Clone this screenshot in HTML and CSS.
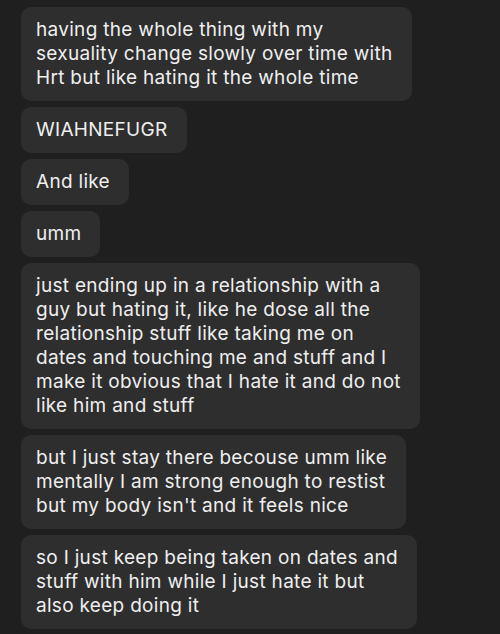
FILE: index.html
```html
<!DOCTYPE html>
<html>
<head>
<meta charset="utf-8">
<link rel="stylesheet" href="styles.css">
</head>
<body>
<div class="chat">
  <div class="msg">having the whole thing with my<br>sexuality change slowly over time with<br>Hrt but like hating it the whole time</div>
  <div class="msg">WIAHNEFUGR</div>
  <div class="msg">And like</div>
  <div class="msg">umm</div>
  <div class="msg">just ending up in a relationship with a<br>guy but hating it, like he dose all the<br>relationship stuff like taking me on<br>dates and touching me and stuff and I<br>make it obvious that I hate it and do not<br>like him and stuff</div>
  <div class="msg">but I just stay there becouse umm like<br>mentally I am strong enough to restist<br>but my body isn't and it feels nice</div>
  <div class="msg">so I just keep being taken on dates and<br>stuff with him while I just hate it but<br>also keep doing it</div>
</div>
</body>
</html>
```
FILE: styles.css
```css
html, body {
  margin: 0;
  background: #1f1f1f;
}
body {
  width: 500px;
  height: 634px;
  overflow: hidden;
}
.chat {
  display: flex;
  flex-direction: column;
  align-items: flex-start;
  gap: 6px;
  padding: 7px 0 0 21px;
}
.msg {
  background: #2e2e2e;
  color: #efefef;
  font-family: Inter, "Open Sans", sans-serif;
  font-size: 19px;
  letter-spacing: 0.3px;
  line-height: 24px;
  padding: 11px 19px 11px 15px;
  border-radius: 10px;
  white-space: nowrap;
}
```
